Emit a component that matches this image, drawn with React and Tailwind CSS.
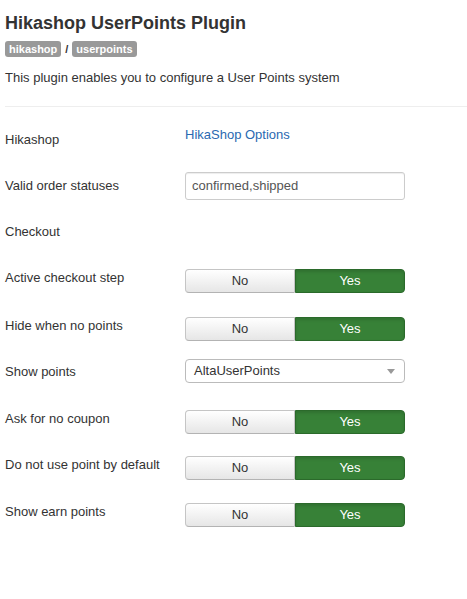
import React from "react";

function Toggle() {
  return (
    <div className="mt-[6px] flex h-[24px] w-[220px] text-[13px] leading-[18px]">
      <div className="flex w-[110px] items-center justify-center rounded-l-[4px] border border-[#c5c5c5] border-b-[#b3b3b3] bg-gradient-to-b from-white to-[#e6e6e6] text-[#333]">
        No
      </div>
      <div className="flex flex-1 items-center justify-center rounded-r-[4px] border border-[#2b6a2b] bg-[#378137] text-white shadow-[inset_0_2px_3px_rgba(0,0,0,0.12)]">
        Yes
      </div>
    </div>
  );
}

function Row({ label, h, children }) {
  return (
    <div className={`flex ${h}`}>
      <div className="w-[180px] pt-[5px] leading-[18px]">{label}</div>
      <div>{children}</div>
    </div>
  );
}

export default function App() {
  return (
    <div
      className="h-[599px] w-[467px] bg-white pl-[5px] text-[13px] text-[#333]"
      style={{ fontFamily: '"Liberation Sans", Arial, sans-serif' }}
    >
      <h1 className="pt-[13px] text-[18px] font-bold leading-[20px] text-[#333]">
        Hikashop UserPoints Plugin
      </h1>
      <div className="mt-[8px] flex items-center gap-[3px] text-[11px] leading-[12px]">
        <span className="rounded-[3px] bg-[#999] px-[4px] py-[2px] font-bold text-white">hikashop</span>
        <span className="px-[1px] font-bold text-[#333]">/</span>
        <span className="rounded-[3px] bg-[#999] px-[4px] py-[2px] font-bold text-white">userpoints</span>
      </div>
      <p className="mt-[12px] leading-[18px]">
        This plugin enables you to configure a User Points system
      </p>
      <div className="mt-[19px] border-t border-[#eeeeee]" />

      <div className="mt-[19px]">
        <Row label="Hikashop" h="h-[46px]">
          <a className="block leading-[18px] text-[#2a69b1]">HikaShop Options</a>
        </Row>
        <Row label="Valid order statuses" h="h-[46px]">
          <div className="mt-[0px] flex h-[28px] w-[220px] items-center rounded-[3px] border border-[#cccccc] px-[6px] text-[#555] shadow-[inset_0_1px_1px_rgba(0,0,0,0.075)]">
            confirmed,shipped
          </div>
        </Row>
        <Row label="Checkout" h="h-[46px]" />
        <Row label="Active checkout step" h="h-[48px]">
          <div className="-mt-[1px]">
            <Toggle />
          </div>
        </Row>
        <Row label="Hide when no points" h="h-[46px]">
          <div className="-mt-[1px]">
            <Toggle />
          </div>
        </Row>
        <Row label="Show points" h="h-[47px]">
          <div className="mt-[1px] flex h-[24px] w-[220px] items-center justify-between rounded-[4px] border border-[#bbbbbb] pl-[8px] pr-[9px] text-[#333]">
            <span>AltaUserPoints</span>
            <svg width="8" height="5" viewBox="0 0 8 5">
              <path d="M0 0 L8 0 L4 5 Z" fill="#999" />
            </svg>
          </div>
        </Row>
        <Row label="Ask for no coupon" h="h-[46px]">
          <div className="-mt-[1px]">
            <Toggle />
          </div>
        </Row>
        <Row label="Do not use point by default" h="h-[47px]">
          <div className="-mt-[1px]">
            <Toggle />
          </div>
        </Row>
        <Row label="Show earn points" h="h-[47px]">
          <div className="-mt-[1px]">
            <Toggle />
          </div>
        </Row>
      </div>
    </div>
  );
}
